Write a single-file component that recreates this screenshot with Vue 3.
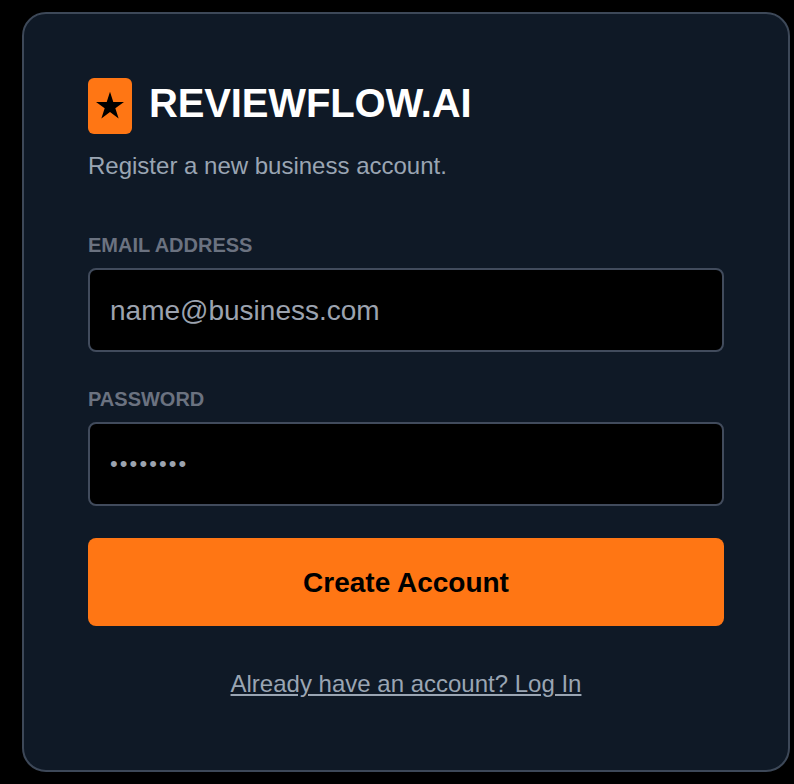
<template>
  <div class="page">
    <div class="card">
      <div class="brand">
        <div class="logo">
          <svg viewBox="0 0 30 30" width="30" height="30"><path d="M15 .8l3.29 10.17H28.98l-8.65 6.26 3.31 10.16L15 21.1l-8.64 6.29 3.31-10.16-8.65-6.26H11.71z" fill="#000" /></svg>
        </div>
        <h1>REVIEWFLOW.AI</h1>
      </div>
      <p class="subtitle">Register a new business account.</p>

      <form class="form" @submit.prevent>
        <div class="field">
          <label for="email">EMAIL ADDRESS</label>
          <input id="email" type="email" placeholder="name@business.com" />
        </div>
        <div class="field">
          <label for="password">PASSWORD</label>
          <input id="password" class="secret" type="password" value="password" />
        </div>
        <button type="submit">Create Account</button>
      </form>

      <a class="login" href="#">Already have an account? Log In</a>
    </div>
  </div>
</template>

<script setup>
</script>

<style>
body {
  background: #000;
}
</style>

<style scoped>
.page {
  width: 794px;
  height: 784px;
  box-sizing: border-box;
  padding: 12px 4px 12px 22px;
  background: #000;
  font-family: "Liberation Sans", Arial, sans-serif;
}

.card {
  height: 760px;
  box-sizing: border-box;
  padding: 64px;
  background: #0f1926;
  border: 2px solid #3d4858;
  border-radius: 24px;
  display: flex;
  flex-direction: column;
}

.brand {
  display: flex;
  align-items: center;
  gap: 17px;
}

.logo {
  width: 44px;
  height: 56px;
  background: #ff7614;
  border-radius: 6px;
  display: flex;
  align-items: center;
  justify-content: center;
}

h1 {
  margin: 0 0 6px;
  font-size: 40px;
  line-height: 48px;
  font-weight: 700;
  letter-spacing: -0.15px;
  color: #fff;
}

.subtitle {
  margin: 16px 0 0;
  font-size: 24px;
  line-height: 32px;
  color: #9aa5b3;
}

.form {
  margin-top: 48px;
  display: flex;
  flex-direction: column;
}

.field {
  display: flex;
  flex-direction: column;
  margin-bottom: 32px;
}

label {
  font-size: 20px;
  line-height: 30px;
  font-weight: 700;
  color: #6b7280;
  margin-bottom: 8px;
}

input {
  height: 84px;
  box-sizing: border-box;
  padding: 2px 20px 0;
  background: #000;
  border: 2px solid #414b5c;
  border-radius: 8px;
  font-family: inherit;
  font-size: 28px;
  color: #9ca3af;
  outline: none;
}

input::placeholder {
  color: #9ca3af;
  opacity: 1;
}

.secret {
  padding-top: 0;
  font-size: 22px;
  letter-spacing: 2.1px;
}

button {
  height: 88px;
  padding: 2px 0 0;
  border: none;
  border-radius: 8px;
  background: #ff7614;
  color: #000;
  font-family: inherit;
  font-size: 28px;
  font-weight: 700;
  cursor: pointer;
}

.login {
  margin-top: 42px;
  align-self: center;
  font-size: 24px;
  line-height: 32px;
  color: #9aa5b3;
  text-decoration: underline;
}
</style>
